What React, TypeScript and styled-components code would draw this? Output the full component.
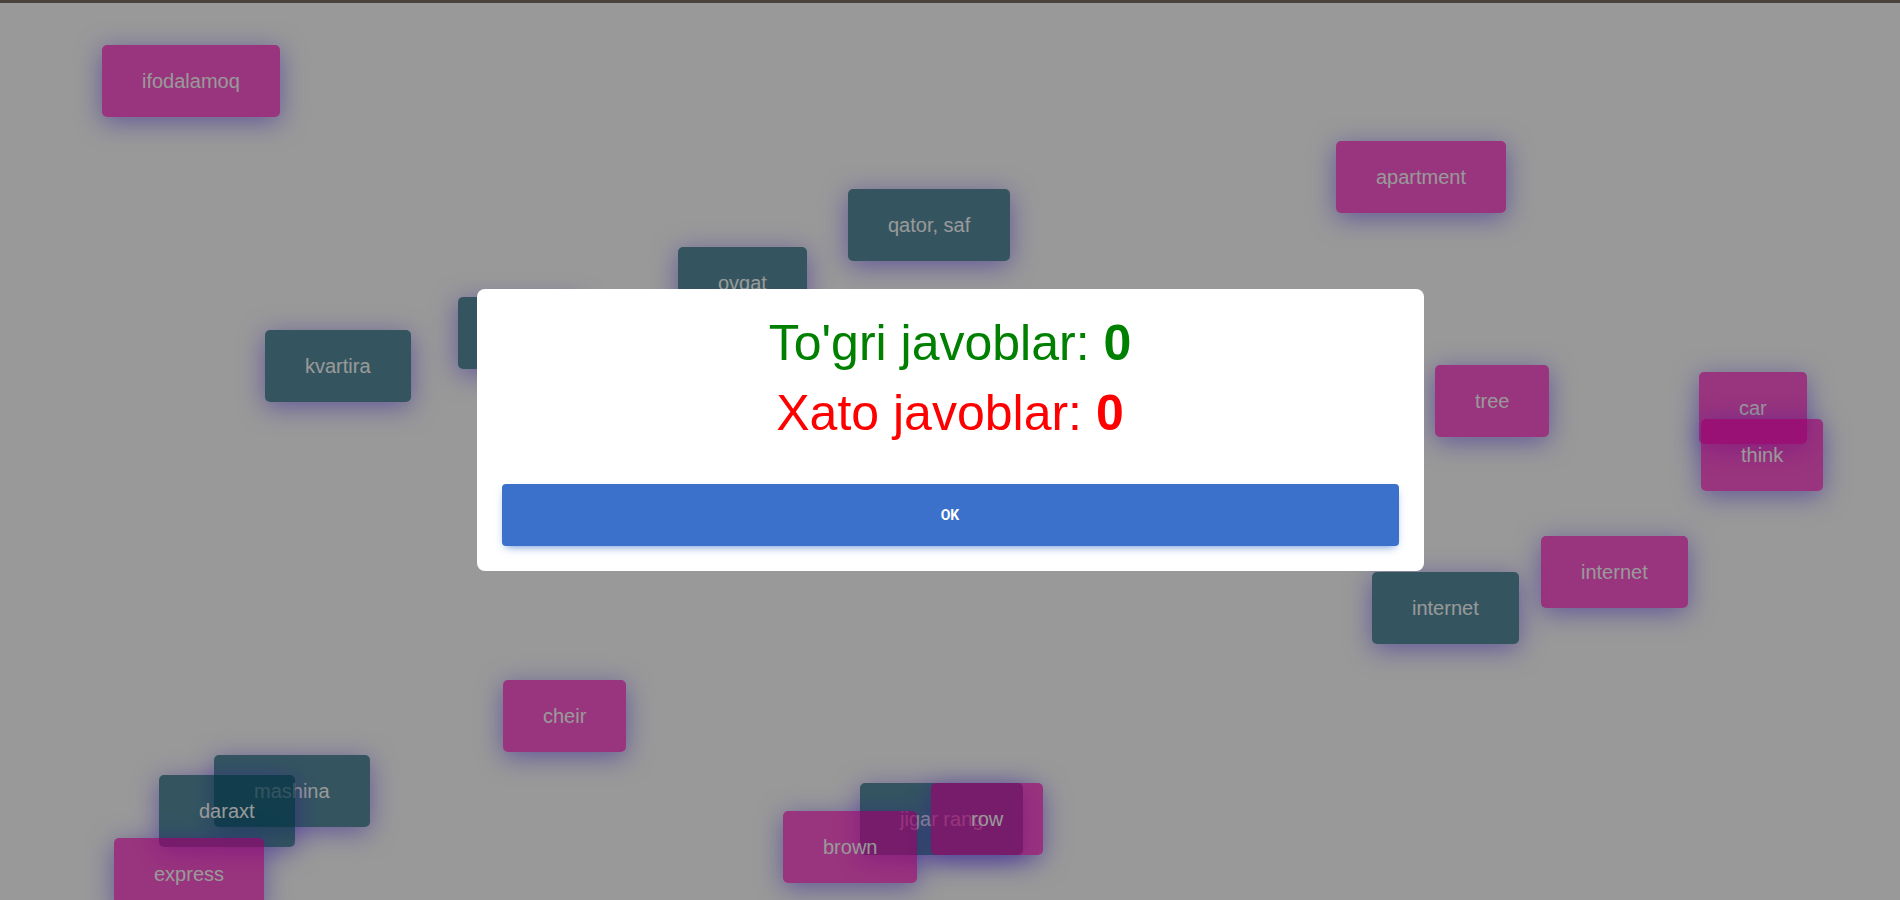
import React from 'react';
import styled, { createGlobalStyle } from 'styled-components';

type Tone = 'pink' | 'dark';

interface Word {
  text: string;
  tone: Tone;
  x: number;
  y: number;
}

// cards as they lie on the board, in paint order
const words: Word[] = [
  { text: 'ifodalamoq', tone: 'pink', x: 102, y: 45 },
  { text: 'apartment', tone: 'pink', x: 1336, y: 141 },
  { text: 'qator, saf', tone: 'dark', x: 848, y: 189 },
  { text: 'ovqat', tone: 'dark', x: 678, y: 247 },
  { text: 'olma', tone: 'dark', x: 458, y: 297 },
  { text: 'kvartira', tone: 'dark', x: 265, y: 330 },
  { text: 'tree', tone: 'pink', x: 1435, y: 365 },
  { text: 'car', tone: 'pink', x: 1699, y: 372 },
  { text: 'think', tone: 'pink', x: 1701, y: 419 },
  { text: 'internet', tone: 'pink', x: 1541, y: 536 },
  { text: 'internet', tone: 'dark', x: 1372, y: 572 },
  { text: 'cheir', tone: 'pink', x: 503, y: 680 },
  { text: 'mashina', tone: 'dark', x: 214, y: 755 },
  { text: 'daraxt', tone: 'dark', x: 159, y: 775 },
  { text: 'express', tone: 'pink', x: 114, y: 838 },
  { text: 'jigar rang', tone: 'dark', x: 860, y: 783 },
  { text: 'brown', tone: 'pink', x: 783, y: 811 },
  { text: 'row', tone: 'pink', x: 931, y: 783 },
];

const TOP_LINE = 3;

const GlobalStyle = createGlobalStyle`
  html, body {
    margin: 0;
    padding: 0;
    background: #fff;
    font-family: "Liberation Sans", Arial, sans-serif;
  }
`;

const Board = styled.div`
  position: relative;
  height: 100vh;
  overflow: hidden;
  box-sizing: border-box;
  border-top: ${TOP_LINE}px solid #7b6e67;
  background: #fff;
`;

const Card = styled.div<{ $tone: Tone }>`
  position: absolute;
  height: 72px;
  padding: 0 40px;
  display: flex;
  align-items: center;
  justify-content: center;
  white-space: nowrap;
  border-radius: 5px;
  font-size: 20px;
  color: #fff;
  background: ${p => p.$tone === 'pink' ? 'rgba(255, 0, 187, 0.66)' : 'rgba(0, 84, 111, 0.66)'};
  box-shadow: 0 5px 26px rgba(80, 40, 255, 0.5);
`;

const Overlay = styled.div`
  position: fixed;
  inset: 0;
  background: rgba(0, 0, 0, 0.4);
  display: flex;
  justify-content: center;
  align-items: center;
  padding-bottom: 40px;
  box-sizing: border-box;
`;

const Dialog = styled.div`
  width: 947px;
  box-sizing: border-box;
  padding: 26px 25px 25px;
  background: #fff;
  border-radius: 8px;
  display: flex;
  flex-direction: column;
`;

const Score = styled.div<{ $color: string }>`
  font-size: 50px;
  line-height: 57px;
  text-align: center;
  color: ${p => p.$color};

  & + & {
    margin-top: 13px;
  }

  b {
    font-weight: 700;
  }
`;

const OkButton = styled.button`
  margin-top: 42px;
  height: 62px;
  border: none;
  border-radius: 4px;
  background: #3b71ca;
  color: #fff;
  font-family: Roboto, "Liberation Sans", sans-serif;
  font-size: 14px;
  font-weight: 700;
  text-transform: uppercase;
  box-shadow: 0 4px 9px -4px rgba(59, 113, 202, 0.9);
  cursor: pointer;
`;

const App = () => (
  <>
    <GlobalStyle />
    <Board>
      {words.map((w, i) => (
        <Card key={i} $tone={w.tone} style={{ left: w.x, top: w.y - TOP_LINE }}>
          {w.text}
        </Card>
      ))}
    </Board>
    <Overlay>
      <Dialog>
        <Score $color="#008000">To'gri javoblar: <b>0</b></Score>
        <Score $color="#ff0000">Xato javoblar: <b>0</b></Score>
        <OkButton>ok</OkButton>
      </Dialog>
    </Overlay>
  </>
);

export default App;
